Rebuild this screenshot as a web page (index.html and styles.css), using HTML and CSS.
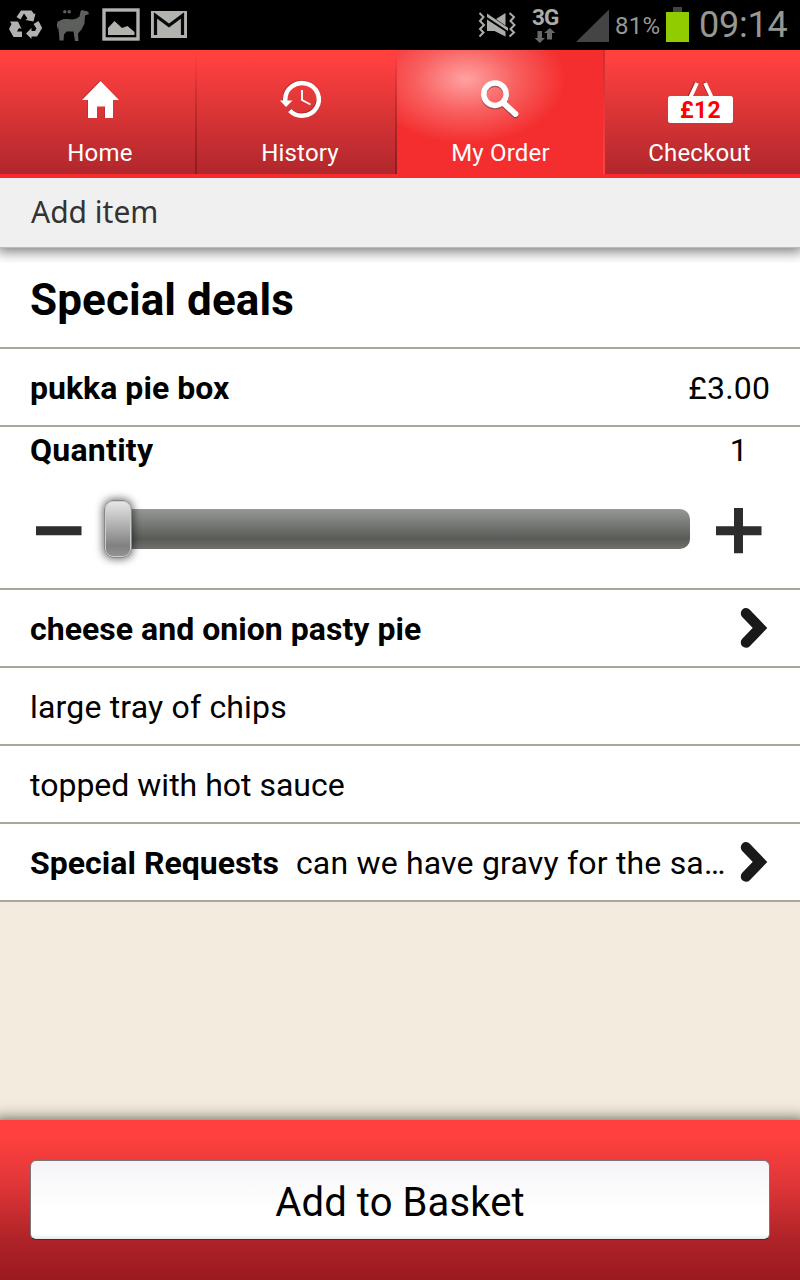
FILE: index.html
```html
<!DOCTYPE html>
<html lang="en">
<head>
<meta charset="utf-8">
<title>Add item</title>
<link rel="stylesheet" href="styles.css">
</head>
<body>
<div class="screen">
  <div class="status">
    <svg class="status-icons" width="200" height="50" viewBox="0 0 200 50">
      <g fill="#b0b3ae">
        <path d="M16.500 17l4.500-6.500h10.500l2.500 3.500 1.500-.5-2 8-8-1.500 2-1.500-3.500-5-3.500 6z"/>
        <path d="M33.500 24l5-3 3.700 7-5.200 8.500h-5.500v2.500l-5.500-5.500 5.500-5.500v3h3.500l1.500-2.500z"/>
        <path d="M10 21.500h8l3.500 7.500-2.500-1-2 3.500h5V37h-8.500l-4.500-8 2.500-5z"/>
      </g>
      <g fill="#5d5f5d">
        <path d="M59 21.500c3-3 8-2.500 12-2 4 0 6-1 8.500-3l1-5 1-1.500 2 .5 4.500 1 1 2.500-4 1.500-.5 8-3 6-3.500 4 .5 7.500h-3.500l-1.500-9.500-7 0-2.500 3-.5 6h-4l-.5-7-1-7c-1 1 0 3-.5 3-1-3-1-6.500 1-9z"/>
        <circle cx="64.800" cy="11.700" r="1.700"/><circle cx="69.200" cy="11.700" r="1.700"/>
      </g>
      <rect x="104" y="10" width="34" height="29" fill="none" stroke="#b0b3ae" stroke-width="3.400"/>
      <path d="M108 35V28l6.500-7 7.500 7 5.500-2 7 6v3z" fill="#b0b3ae"/>
      <rect x="151" y="11" width="36" height="27" fill="#b0b3ae"/>
      <path d="M155.500 35V15.500L169 25.500 182.500 15.500V35" fill="none" stroke="#080808" stroke-width="3.200"/>
    </svg>
    <div class="status-right">
      <svg width="100" height="50" viewBox="0 0 100 50">
        <path d="M9.500 13l4 4-3.500 4 4 4-4 4 3.500 3.500-4 4M39.500 13l4.500 4-3.500 4 4 4-4 4 3.500 3.500-4.500 4" fill="none" stroke="#aaada9" stroke-width="2"/>
        <path d="M17 19.500v11.500h7.500L35.500 36.500v-5L17 19.500zM26 19l9.500-6v12.500z" fill="#aaada9"/>
        <path d="M16 15l21.500 15" stroke="#000" stroke-width="2"/>
        <path d="M17 13.500l21 14.200v3.300L17 17z" fill="#aaada9"/>
        <path d="M67.500 31h4.500v7h3l-5.200 5-5.200-5h2.900zM77 39.500v-6.500h-3l5.800-5 5.500 5h-3.300v6.500z" fill="#686868"/>
        <text class="net" x="62" y="25">3G</text>
      </svg>
      <svg class="signal" width="33" height="50"><path d="M0 42L33 9.500V42z" fill="#444"/></svg>
      <span class="percent">81%</span>
      <svg class="battery" width="23" height="50"><path d="M7 7h9v5H7z" fill="#444"/><path d="M0 12h23v30H0z" fill="#90cc00"/></svg>
      <span class="clock">09:14</span>
    </div>
  </div>

  <nav class="tabs">
    <a class="tab">
      <svg class="tab-icon" width="80" height="50" viewBox="0 0 80 50"><path d="M40.500 11L59 30h-6v18h-8V36.500h-8V48h-9V30h-6z" fill="#702020" opacity=".5" transform="translate(-.5 -.8)"/><path d="M40.500 11L59 30h-6v18h-8V36.500h-8V48h-9V30h-6z" fill="#fff"/></svg>
      <span class="label">Home</span>
    </a>
    <a class="tab">
      <svg class="tab-icon" width="80" height="50" viewBox="0 0 80 50">
        <path d="M25.200 31v-1.500a16.800 16.300 0 1 1 4.500 11" fill="none" stroke="#702020" opacity=".5" stroke-width="4.500" transform="translate(-.5 -.8)"/>
        <path d="M25.200 31v-1.500a16.800 16.300 0 1 1 4.500 11" fill="none" stroke="#fff" stroke-width="4.500"/>
        <path d="M20 30.500h12.500L26 37z" fill="#fff"/>
        <path d="M42 20v10l8.500 4.500" fill="none" stroke="#fff" stroke-width="1.900"/>
      </svg>
      <span class="label">History</span>
    </a>
    <a class="tab active">
      <svg class="tab-icon" width="80" height="50" viewBox="0 0 80 50">
        <g fill="none" stroke="#5c4040" opacity=".55" transform="translate(-1 1)"><circle cx="35" cy="24.500" r="11.300" stroke-width="5.500"/><path d="M43.500 33.500L55.500 44.500" stroke-width="6" stroke-linecap="round"/></g>
        <g fill="none" stroke="#fff" transform="translate(-1 0)"><circle cx="35" cy="24.200" r="11.200" stroke-width="5.500"/><path d="M43.500 33L55.500 44" stroke-width="5.800" stroke-linecap="round"/></g>
      </svg>
      <span class="label">My Order</span>
    </a>
    <a class="tab">
      <svg class="tab-icon basket-icon" width="80" height="55" viewBox="0 0 80 55">
        <path d="M29.500 28l7-15M51.500 28l-7-15" stroke="#702020" opacity=".6" stroke-width="4" transform="translate(-1 -.5)"/>
        <path d="M29.500 28l7-15M51.500 28l-7-15" stroke="#fff" stroke-width="3.800"/>
        <rect x="7.500" y="26" width="65" height="27" rx="2.500" fill="#fff"/>
        <text class="total" x="40" y="48" text-anchor="middle">£12</text>
      </svg>
      <span class="label">Checkout</span>
    </a>
  </nav>

  <header class="titlebar">Add item</header>

  <main class="content">
    <h1 class="heading"><span>Special deals</span></h1>
    <div class="row"><b>pukka pie box</b><span class="price">£3.00</span></div>
    <section class="quantity">
      <div class="quantity-head"><b>Quantity</b><span class="count">1</span></div>
      <div class="slider">
        <svg class="minus" width="46" height="46"><path d="M0 18.300h45.500v9H0z" fill="#2d2d2d"/></svg>
        <div class="track"><div class="thumb"></div></div>
        <svg class="plus" width="46" height="46"><path d="M18 0h9v18.200h18.500v9H27v18h-9v-18H0v-9h18z" fill="#2d2d2d"/></svg>
      </div>
    </section>
    <div class="row"><b class="pie">cheese and onion pasty pie</b><svg class="chevron" width="28" height="42"><path d="M6 6.300L20 21 6 35.500" fill="none" stroke="#191919" stroke-width="10.500" stroke-linecap="round"/></svg></div>
    <div class="row"><span class="chips">large tray of chips</span></div>
    <div class="row"><span>topped with hot sauce</span></div>
    <div class="row"><b class="requests">Special Requests</b><span class="note">can we have gravy for the sa…</span><svg class="chevron" width="28" height="42"><path d="M6 6.300L20 21 6 35.500" fill="none" stroke="#191919" stroke-width="10.500" stroke-linecap="round"/></svg></div>
  </main>

  <footer class="footer"><button class="basket">Add to Basket</button></footer>
</div>
</body>
</html>
```
FILE: styles.css
```css
* { box-sizing: border-box; }
body { margin: 0; font-family: Roboto, sans-serif; color: #000; }
svg { display: block; flex: none; }
.screen { width: 800px; height: 1280px; display: flex; flex-direction: column; background: #f3ebde; overflow: hidden; }

.status { height: 50px; flex: none; background: #000; display: flex; justify-content: space-between; color: #969894; }
.status-right { display: flex; width: 330px; align-items: center; white-space: nowrap; }
.signal { margin-left: 6px; }
.percent { font-size: 24px; width: 45px; margin: 2px 0 0 6px; letter-spacing: 0.3px; }
.battery { margin-left: 6px; }
.clock { font-size: 36px; margin-left: 10px; letter-spacing: -0.2px; }
.net { font: 700 22.5px Roboto, sans-serif; fill: #aaada9; letter-spacing: -1px; }

.tabs { height: 128px; flex: none; display: grid; grid-template-columns: 197px 200px 208px 195px; border-bottom: 4px solid #f62c2e; background: #f62c2e; }
.tab { display: flex; flex-direction: column; align-items: center; padding-top: 20px; color: #fff; background: linear-gradient(#ff403f 8%, #b0272c); position: relative; }
/* Divider that fades in towards the bottom edge */
.tab::after { content: ""; position: absolute; right: 0; top: 0; width: 2px; height: 100%; background: linear-gradient(rgba(125, 20, 28, 0), rgba(125, 20, 28, .65)); }
.tab:last-child::after { display: none; }
.tab.active { background: radial-gradient(ellipse 100px 65px at 69px 29px, #ffa2a2, #f8605f 50%, #f42d2e 100%); padding-right: 1px; }
.tab.active::after { background: linear-gradient(#c9302f, #ff4245); }
.tab:last-child { padding-right: 6px; }
.tab-icon { height: 50px; margin-bottom: 5px; }
.tab-icon.basket-icon { height: 55px; margin-bottom: 0; transform: translateX(.5px); }
.tab:first-child { padding-left: 3px; }
.tab:nth-child(2) { padding-left: 6px; }
.label { font-size: 24px; line-height: 28px; margin-top: 14px; letter-spacing: 0.2px; white-space: nowrap; }
.total { font: 700 23px Roboto, sans-serif; fill: #f00; letter-spacing: 0.3px; }

.titlebar { height: 70px; flex: none; display: flex; align-items: center; padding: 0 31px 2px; background: #f0f0f0; font: 30px "Noto Sans", sans-serif; color: #333; box-shadow: 0 1px 12px 3px rgba(0, 0, 0, .5); border-bottom: 1px solid #bbb; position: relative; clip-path: inset(0 0 -15px); }
.content { background: #fff; font-size: 32px; flex: none; }
.heading { margin: 0; height: 101px; padding: 4px 30px 0; display: flex; align-items: center; font-size: 44px; border-bottom: 2px solid #aaa69c; letter-spacing: 0.1px; }
.row { height: 78px; padding: 2px 30px 0; display: flex; align-items: center; border-bottom: 2px solid #aaa69c; white-space: nowrap; }
.row b { letter-spacing: 0.03px; }
.price { margin-left: auto; letter-spacing: 0.2px; margin-right: -0.2px; }
.chevron { margin: -3px 2.500px 0 auto; }
.chips { letter-spacing: 0.18px; }
.note { margin-left: 17px; letter-spacing: 0.19px; }
.quantity { height: 163px; border-bottom: 2px solid #aaa69c; }
.quantity-head { display: flex; justify-content: space-between; padding: 4px 52px 0 30px; line-height: 38px; letter-spacing: 0.25px; }
.slider { display: flex; align-items: center; padding: 39px 38px 0 36px; height: 85px; }
.track { width: 585px; height: 40px; margin-left: 23px; margin-top: -5px; border-radius: 0 10px 10px 0; background: linear-gradient(#969896, #585b56 75%, #6f716d); display: flex; align-items: center; }
.thumb { width: 28px; height: 58px; flex: none; margin-left: -1px; border: 1px solid #888; border-radius: 9px; background: linear-gradient(#e8e8e8, #b5b5b5 40%, #808080 80%, #959595); box-shadow: 0 0 8px 1px rgba(0, 0, 0, .6), inset 0 0 0 1px #ccc; }
.plus { margin-left: 26px; }

.footer { height: 160px; margin-top: auto; flex: none; padding: 40px 30px; background: linear-gradient(#ff403f 10%, #e03638 40%, #ae2327 75%, #9a1a1f); box-shadow: 0 6px 14px 7px rgba(40, 45, 35, .75); }
.basket { display: block; width: 740px; height: 80px; border: 1px solid #77777a; border-bottom-color: #333; border-radius: 6px; background: linear-gradient(#f5f3f7, #fff 60%, #fff 94%, #e8e8e8); font: 40px Roboto, sans-serif; color: #000; padding: 4px 0 0; letter-spacing: 0.1px; }
```
